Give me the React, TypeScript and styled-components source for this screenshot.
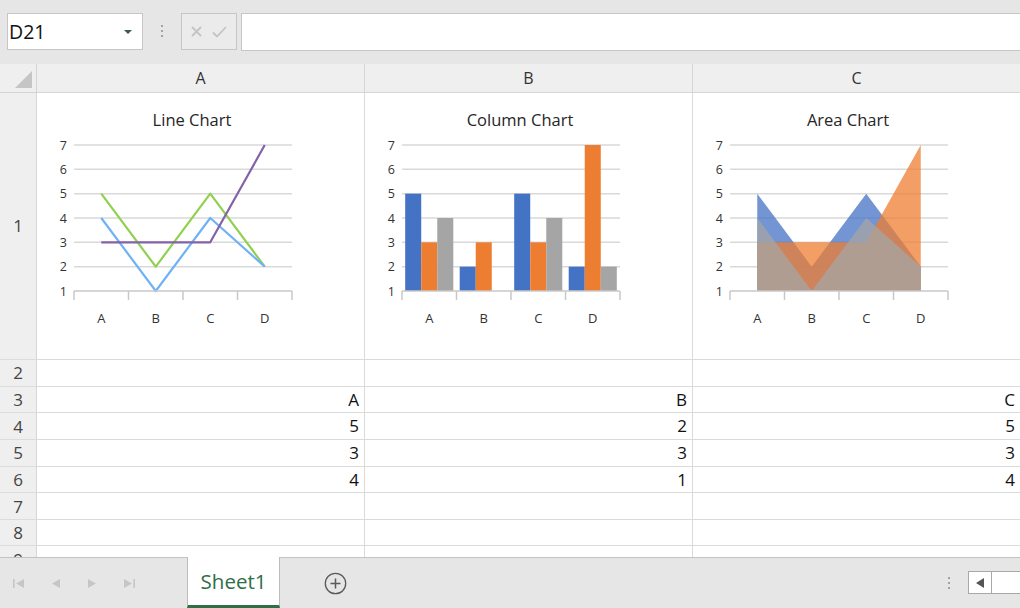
import React from "react";
import styled, { createGlobalStyle } from "styled-components";

const GlobalStyle = createGlobalStyle`
  html, body {
    margin: 0;
    padding: 0;
    overflow: hidden;
    background: #e6e6e6;
  }
  body {
    font-family: "Open Sans", "Noto Sans", Arial, sans-serif;
  }
`;

type Kind = "line" | "column" | "area";

const SERIES = {
  blue: [5, 2, 5, 2],
  orange: [3, 3, 3, 7],
  gray: [4, 1, 4, 2],
};

const PLOT_L = 37;
const PLOT_R = 255;
const TOP = 52;
const BOTTOM = 198;
const CAT_W = (PLOT_R - PLOT_L) / 4;
const CATS = ["A", "B", "C", "D"];

const yOf = (v: number) => BOTTOM - ((v - 1) * (BOTTOM - TOP)) / 6;
const xOf = (i: number) => PLOT_L + CAT_W * (i + 0.5);

const pts = (vals: number[]) => vals.map((v, i) => `${xOf(i)},${yOf(v)}`).join(" ");
const areaPts = (vals: number[]) =>
  `${xOf(0)},${BOTTOM} ${pts(vals)} ${xOf(3)},${BOTTOM}`;

const Chart = ({ kind, title }: { kind: Kind; title: string }) => {
  const barGap = 3.2;
  const barW = (CAT_W - barGap * 2) / 3;
  return (
    <svg width="328" height="267" viewBox="0 0 328 267">
      <text x="155" y="32.5" textAnchor="middle" fontSize="16.5" fill="#262626" fontFamily="Open Sans">
        {title}
      </text>
      {[2, 3, 4, 5, 6, 7].map((v) => (
        <line key={v} x1={PLOT_L} x2={PLOT_R} y1={yOf(v)} y2={yOf(v)} stroke="#d9d9d9" strokeWidth="1.5" />
      ))}
      {[1, 2, 3, 4, 5, 6, 7].map((v) => (
        <text key={v} x={PLOT_L - 7} y={yOf(v) + 4.5} textAnchor="end" fontSize="12.5" fill="#333" fontFamily="Open Sans">
          {v}
        </text>
      ))}

      {kind === "line" && (
        <g fill="none" strokeWidth="2.2" strokeLinejoin="round">
          <polyline points={pts(SERIES.blue)} stroke="#92d050" />
          <polyline points={pts(SERIES.gray)} stroke="#70b2f5" />
          <polyline points={pts(SERIES.orange)} stroke="#8562a8" />
        </g>
      )}

      {kind === "column" &&
        CATS.map((_, i) =>
          [
            [SERIES.blue[i], "#4472c4"],
            [SERIES.orange[i], "#ed7d31"],
            [SERIES.gray[i], "#a5a5a5"],
          ].map(([v, c], j) => {
            const x = PLOT_L + CAT_W * i + barGap + j * barW;
            const top = yOf(v as number);
            return <rect key={`${i}-${j}`} x={x} y={top} width={barW} height={BOTTOM - top} fill={c as string} />;
          })
        )}

      {kind === "area" && (
        <g fillOpacity="0.75">
          <polygon points={areaPts(SERIES.blue)} fill="#4472c4" />
          <polygon points={areaPts(SERIES.orange)} fill="#ed7d31" />
          <polygon points={areaPts(SERIES.gray)} fill="#a5a5a5" />
        </g>
      )}

      <line x1={PLOT_L} x2={PLOT_R} y1={BOTTOM} y2={BOTTOM} stroke="#c8c8c8" strokeWidth="1.5" />
      {[0, 1, 2, 3, 4].map((i) => (
        <line
          key={i}
          x1={PLOT_L + CAT_W * i}
          x2={PLOT_L + CAT_W * i}
          y1={BOTTOM}
          y2={BOTTOM + 9}
          stroke="#c8c8c8"
          strokeWidth="1.5"
        />
      ))}
      {CATS.map((c, i) => (
        <text key={c} x={xOf(i)} y="230" textAnchor="middle" fontSize="13" fill="#333" fontFamily="Open Sans">
          {c}
        </text>
      ))}
    </svg>
  );
};

const DATA_ROWS: { n: number; vals: string[] }[] = [
  { n: 2, vals: ["", "", ""] },
  { n: 3, vals: ["A", "B", "C"] },
  { n: 4, vals: ["5", "2", "5"] },
  { n: 5, vals: ["3", "3", "3"] },
  { n: 6, vals: ["4", "1", "4"] },
  { n: 7, vals: ["", "", ""] },
  { n: 8, vals: ["", "", ""] },
  { n: 9, vals: ["", "", ""] },
  { n: 10, vals: ["", "", ""] },
];

const Dots = () => (
  <svg width="4" height="13" viewBox="0 0 4 13">
    <rect x="1" y="0" width="2" height="2" fill="#a3a3a3" />
    <rect x="1" y="5" width="2" height="2" fill="#a3a3a3" />
    <rect x="1" y="10" width="2" height="2" fill="#a3a3a3" />
  </svg>
);

const App = () => {
  return (
    <Frame>
      <GlobalStyle />
      <Toolbar>
        <NameBox>
          <NameText>D21</NameText>
          <Caret />
        </NameBox>
        <Grip $width={38} $height="37px">
          <Dots />
        </Grip>
        <EditButtons>
          <svg width="11" height="11" viewBox="0 0 11 11">
            <path d="M1 1 L10 10 M10 1 L1 10" stroke="#c4c4c4" strokeWidth="1.8" />
          </svg>
          <svg width="15" height="12" viewBox="0 0 15 12">
            <path d="M1 6.5 L5 10.5 L14 1" stroke="#c4c4c4" strokeWidth="1.8" fill="none" />
          </svg>
        </EditButtons>
        <FormulaBox />
      </Toolbar>

      <Sheet>
        <Corner>
          <CornerMark />
        </Corner>
        <ColHead>A</ColHead>
        <ColHead>B</ColHead>
        <ColHead>C</ColHead>

        <RowHead>1</RowHead>
        <ChartCell>
          <Chart kind="line" title="Line Chart" />
        </ChartCell>
        <ChartCell>
          <Chart kind="column" title="Column Chart" />
        </ChartCell>
        <ChartCell>
          <Chart kind="area" title="Area Chart" />
        </ChartCell>

        {DATA_ROWS.map((row) => (
          <React.Fragment key={row.n}>
            <RowHead>{row.n}</RowHead>
            {row.vals.map((v, i) => (
              <Cell key={i}>{v}</Cell>
            ))}
          </React.Fragment>
        ))}
      </Sheet>

      <StatusBar>
        <NavGroup>
          <NavButton>
            <svg width="11" height="9" viewBox="0 0 11 9">
              <rect x="0" y="0" width="1.6" height="9" fill="#c6c6c6" />
              <path d="M11 0 L3 4.5 L11 9 Z" fill="#c6c6c6" />
            </svg>
          </NavButton>
          <NavButton>
            <svg width="9" height="9" viewBox="0 0 9 9">
              <path d="M9 0 L1 4.5 L9 9 Z" fill="#c6c6c6" />
            </svg>
          </NavButton>
          <NavButton>
            <svg width="9" height="9" viewBox="0 0 9 9">
              <path d="M0 0 L8 4.5 L0 9 Z" fill="#c6c6c6" />
            </svg>
          </NavButton>
          <NavButton>
            <svg width="11" height="9" viewBox="0 0 11 9">
              <path d="M0 0 L8 4.5 L0 9 Z" fill="#c6c6c6" />
              <rect x="9.4" y="0" width="1.6" height="9" fill="#c6c6c6" />
            </svg>
          </NavButton>
        </NavGroup>
        <SheetTab>Sheet1</SheetTab>
        <AddSheet>
          <svg width="23" height="23" viewBox="0 0 23 23">
            <circle cx="11.5" cy="11.5" r="10.2" fill="none" stroke="#5a5a5a" strokeWidth="1.3" />
            <path d="M11.5 6.5 V16.5 M6.5 11.5 H16.5" stroke="#5a5a5a" strokeWidth="1.5" />
          </svg>
        </AddSheet>
        <Spacer />
        <Grip $width={20} $height="100%">
          <Dots />
        </Grip>
        <HScroll>
          <ScrollArrow>
            <svg width="8" height="10" viewBox="0 0 8 10">
              <path d="M8 0 L0 5 L8 10 Z" fill="#555" />
            </svg>
          </ScrollArrow>
        </HScroll>
      </StatusBar>
    </Frame>
  );
};

const Frame = styled.div`
  display: flex;
  flex-direction: column;
  width: 1020px;
  height: 608px;
  overflow: hidden;
  background: #e6e6e6;
`;
const Toolbar = styled.div`
  display: flex;
  align-items: flex-start;
  height: 64px;
  padding: 13px 0 0 7px;
  box-sizing: border-box;
  flex-shrink: 0;
  background: #e6e6e6;
`;
const NameBox = styled.div`
  display: flex;
  align-items: center;
  justify-content: space-between;
  width: 136px;
  height: 37px;
  box-sizing: border-box;
  padding: 0 10px 0 1px;
  background: #fff;
  border: 1px solid #c6c6c6;
`;
const NameText = styled.span`
  font-size: 19.5px;
  color: #111;
`;
const Caret = styled.span`
  width: 0;
  height: 0;
  border-left: 4.5px solid transparent;
  border-right: 4.5px solid transparent;
  border-top: 4.5px solid #3a5c46;
`;
const Grip = styled.div<{ $width: number; $height: string }>`
  display: flex;
  align-items: center;
  justify-content: center;
  width: ${(p) => p.$width}px;
  height: ${(p) => p.$height};
`;
const EditButtons = styled.div`
  display: flex;
  align-items: center;
  justify-content: space-between;
  width: 56px;
  height: 37px;
  box-sizing: border-box;
  padding: 0 9px 0 9px;
  background: #ebebeb;
  border: 1px solid #c6c6c6;
`;
const FormulaBox = styled.div`
  flex: 1;
  height: 38px;
  margin-left: 4px;
  box-sizing: border-box;
  background: #fff;
  border: 1px solid #c6c6c6;
  border-right: none;
`;
const Sheet = styled.div`
  flex: 1;
  display: grid;
  grid-template-columns: 37px 328px 328px 328px;
  grid-template-rows: 28.5px 267.4px;
  grid-auto-rows: 26.667px;
  overflow: hidden;
  background: #fff;
`;
const Corner = styled.div`
  position: relative;
  background: #efefef;
  border-right: 1px solid #d4d4d4;
  border-bottom: 1px solid #d4d4d4;
`;
const CornerMark = styled.span`
  position: absolute;
  right: 4px;
  bottom: 4px;
  width: 0;
  height: 0;
  border-left: 17px solid transparent;
  border-bottom: 17px solid #c5c5c5;
`;
const ColHead = styled.div`
  background: #efefef;
  border-right: 1px solid #d6d6d6;
  border-bottom: 1px solid #d6d6d6;
  text-align: center;
  font-size: 16px;
  line-height: 28px;
  color: #333;
`;
const RowHead = styled.div`
  display: flex;
  align-items: center;
  justify-content: center;
  background: #efefef;
  border-right: 1px solid #d6d6d6;
  border-bottom: 1px solid #dcdcdc;
  font-size: 17px;
  color: #444;
`;
const Cell = styled.div`
  box-sizing: border-box;
  border-right: 1px solid #dadada;
  border-bottom: 1px solid #dadada;
  padding-right: 5px;
  text-align: right;
  font-size: 17px;
  line-height: 26px;
  color: #111;
  white-space: nowrap;
  overflow: hidden;
`;
const ChartCell = styled.div`
  border-right: 1px solid #dadada;
  border-bottom: 1px solid #dadada;
  overflow: hidden;
`;
const StatusBar = styled.div`
  display: flex;
  align-items: stretch;
  height: 51px;
  flex-shrink: 0;
  box-sizing: border-box;
  border-top: 1px solid #c3c3c3;
  background: #e6e6e6;
`;
const NavGroup = styled.div`
  display: flex;
  align-items: center;
  width: 187px;
`;
const NavButton = styled.div`
  display: flex;
  align-items: center;
  justify-content: center;
  width: 37px;
  height: 100%;
`;
const SheetTab = styled.div`
  display: flex;
  align-items: center;
  justify-content: center;
  width: 93px;
  margin-top: -1px;
  box-sizing: border-box;
  background: #fff;
  border-left: 1px solid #bdbdbd;
  border-right: 1px solid #bdbdbd;
  border-bottom: 3px solid #2f6e47;
  font-size: 20.5px;
  color: #2f6e47;
`;
const AddSheet = styled.div`
  display: flex;
  align-items: center;
  justify-content: center;
  width: 46px;
  margin-left: 32px;
`;
const Spacer = styled.div`
  flex: 1;
`;
const HScroll = styled.div`
  display: flex;
  align-self: flex-start;
  width: 60px;
  height: 23px;
  margin: 13px -8px 0 9px;
  box-sizing: border-box;
  background: #fff;
  border: 1px solid #a8a8a8;
`;
const ScrollArrow = styled.div`
  display: flex;
  align-items: center;
  justify-content: center;
  width: 22px;
  border-right: 1px solid #a8a8a8;
`;

export default App;
